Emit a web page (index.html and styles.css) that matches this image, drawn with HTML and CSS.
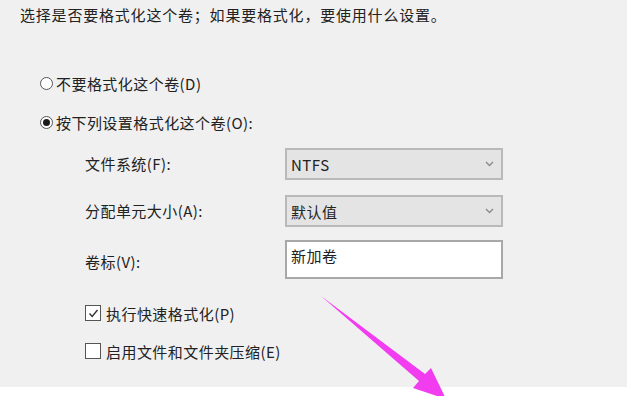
FILE: index.html
```html
<!DOCTYPE html>
<html lang="zh-CN">
<head>
<meta charset="utf-8">
<title>格式化分区</title>
<link rel="stylesheet" href="styles.css">
</head>
<body>
<div class="page">
  <div class="main">
    <p class="intro">选择是否要格式化这个卷；如果要格式化，要使用什么设置。</p>
    <div class="radios">
      <div class="radio-row"><span class="radio"></span><span>不要格式化这个卷(D)</span></div>
      <div class="radio-row"><span class="radio checked"></span><span>按下列设置格式化这个卷(O):</span></div>
    </div>
    <div class="form">
      <div class="label">文件系统(F):</div>
      <div class="combo"><span>NTFS</span><svg class="chev" width="9" height="6" viewBox="0 0 9 6"><path d="M1 1 L4.5 4.5 L8 1" fill="none" stroke="#8a8a8a" stroke-width="1.4"/></svg></div>
      <div class="label">分配单元大小(A):</div>
      <div class="combo"><span>默认值</span><svg class="chev" width="9" height="6" viewBox="0 0 9 6"><path d="M1 1 L4.5 4.5 L8 1" fill="none" stroke="#8a8a8a" stroke-width="1.4"/></svg></div>
      <div class="label">卷标(V):</div>
      <div class="textbox">新加卷</div>
    </div>
    <div class="checks">
      <div class="check-row"><span class="box"><svg width="13" height="13" viewBox="0 0 13 13"><path d="M2.5 6.5 L5.2 9.5 L10.5 3" fill="none" stroke="#333" stroke-width="1.4"/></svg></span><span>执行快速格式化(P)</span></div>
      <div class="check-row"><span class="box"></span><span>启用文件和文件夹压缩(E)</span></div>
    </div>
  </div>
  <div class="footer"></div>
  <svg class="arrow" width="627" height="396" viewBox="0 0 627 396">
    <polygon points="321,296 425,374 431,368 446,399 413,388 419,381" fill="#f23cf0"/>
  </svg>
</div>
</body>
</html>
```
FILE: styles.css
```css
html, body {
  margin: 0;
  padding: 0;
}
body {
  background: #f0f0f0;
  font-family: "Noto Sans CJK SC", "Liberation Sans", sans-serif;
  font-size: 15px;
  letter-spacing: 0.45px;
  color: #222;
}
.page {
  position: relative;
  width: 627px;
  height: 396px;
  display: flex;
  flex-direction: column;
  overflow: hidden;
}
.main {
  flex: 1;
  padding: 6px 0 0 20px;
}
.intro {
  margin: 0;
  line-height: 18px;
  letter-spacing: 0.8px;
}
.radios {
  margin: 49px 0 0 20px;
  display: flex;
  flex-direction: column;
  gap: 19px;
}
.radio-row {
  display: flex;
  align-items: center;
  gap: 3px;
  height: 20px;
}
.radio {
  box-sizing: border-box;
  width: 13px;
  height: 13px;
  border: 1px solid #555;
  border-radius: 50%;
  background: #fff;
  display: flex;
  align-items: center;
  justify-content: center;
}
.radio.checked::after {
  content: "";
  width: 7px;
  height: 7px;
  border-radius: 50%;
  background: #1a1a1a;
}
.form {
  margin: 16px 0 0 65px;
  display: grid;
  grid-template-columns: 200px 218px;
  grid-template-rows: 32px 32px 39px;
  row-gap: 15px;
  align-items: center;
}
.form .textbox {
  margin-top: -4px;
}
.label {
  line-height: 18px;
}
.combo {
  box-sizing: border-box;
  height: 32px;
  background: #e4e4e4;
  border: 2px solid #b9b9b9;
  display: flex;
  align-items: center;
  justify-content: space-between;
  padding: 0 7px 0 4px;
}
.chev {
  display: block;
}
.textbox {
  box-sizing: border-box;
  height: 39px;
  background: #fff;
  border: 2px solid #a8a8a8;
  padding: 5px 4px;
  line-height: 18px;
}
.checks {
  margin: 22px 0 0 65px;
  display: flex;
  flex-direction: column;
  gap: 18px;
}
.check-row {
  display: flex;
  align-items: center;
  gap: 5px;
  height: 20px;
}
.box {
  box-sizing: border-box;
  width: 16px;
  height: 16px;
  border: 1.5px solid #555;
  background: #fff;
  display: flex;
  align-items: center;
  justify-content: center;
}
.footer {
  height: 9px;
  background: #fff;
}
.arrow {
  position: absolute;
  left: 0;
  top: 0;
  pointer-events: none;
}
```
